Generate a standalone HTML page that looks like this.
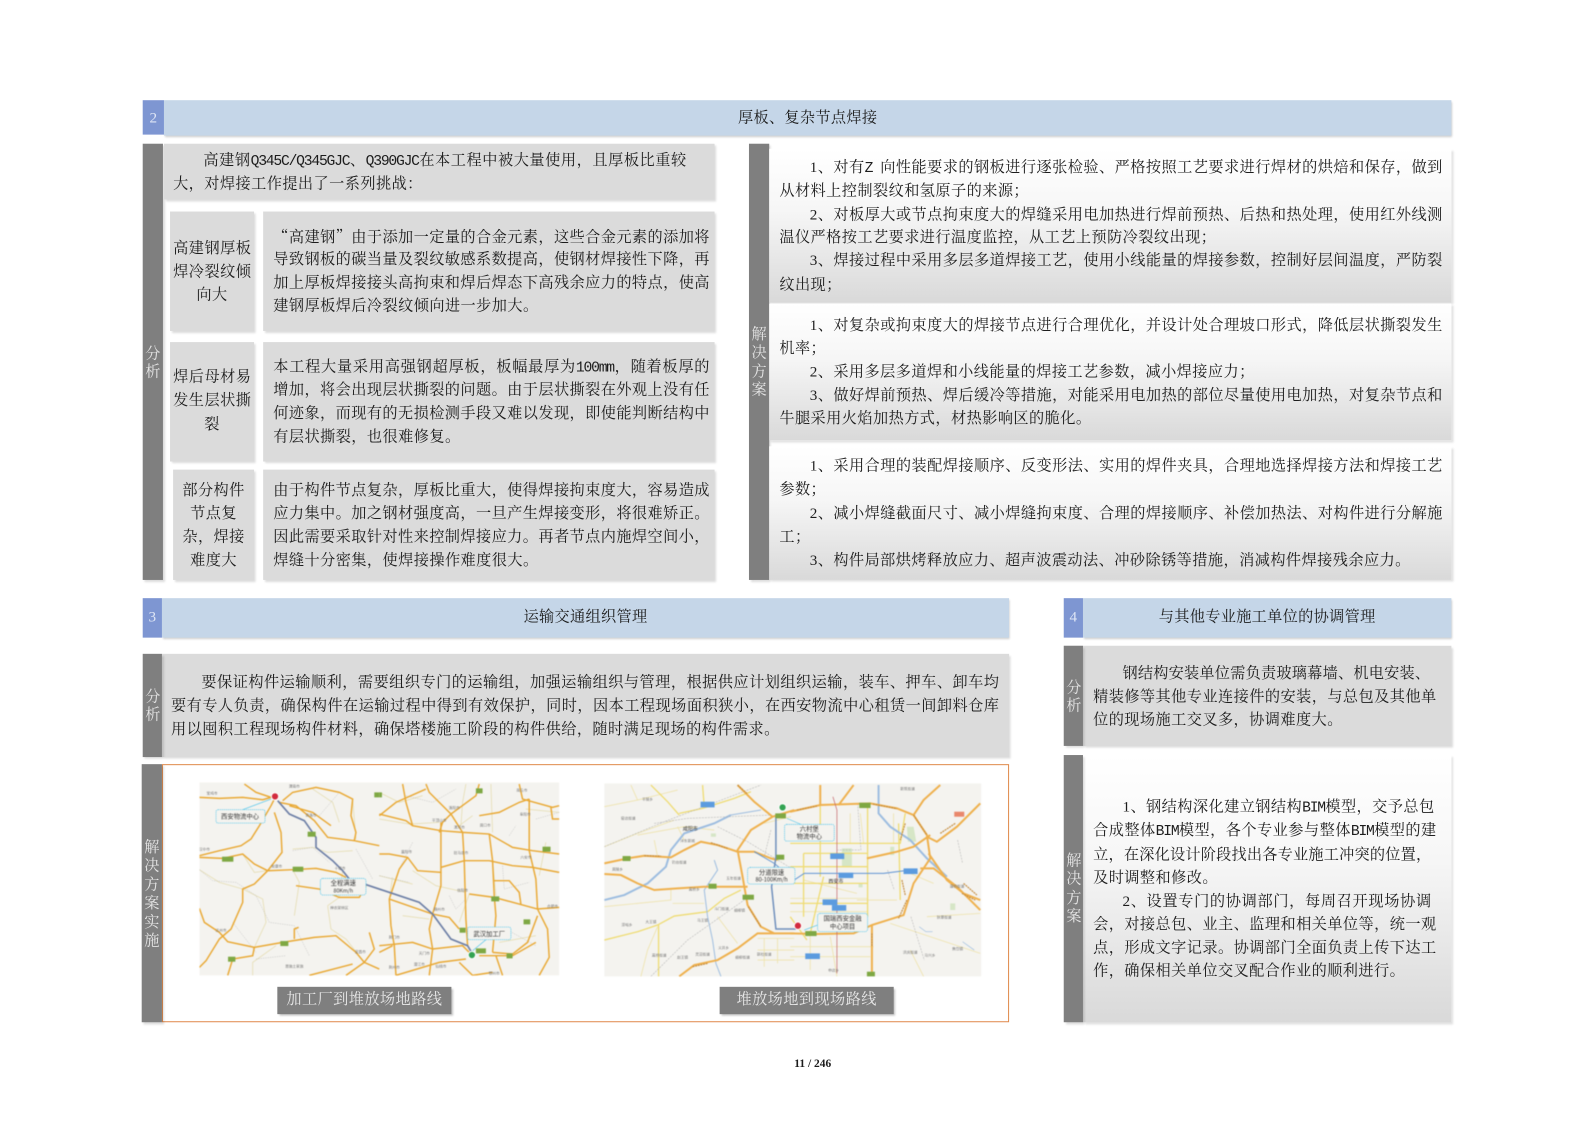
<!DOCTYPE html>
<html lang="zh"><head><meta charset="utf-8"><title>厚板、复杂节点焊接</title>
<style>
html,body{margin:0;padding:0;background:#fff}
body{width:1587px;height:1122px;overflow:hidden;position:relative}
#p{position:absolute;left:0;top:0;width:1568px;height:1108px;transform:scale(1.01212);transform-origin:0 0;font-family:"Liberation Serif","Noto Serif CJK SC",serif;font-size:15px;color:#1c1c1c}
#p div{position:absolute;box-sizing:border-box}
.b{background:#dbdbdb;box-shadow:2px 2px 2px rgba(0,0,0,.14)}
.g{background:linear-gradient(#fff 0%,#f6f6f6 40%,#d9d9d9 100%);box-shadow:2px 2px 2px rgba(0,0,0,.12)}
.h{background:#c5d6e8;box-shadow:1px 2px 2px rgba(0,0,0,.2);text-align:center;line-height:36px;letter-spacing:.3px}
.n{background:#7e96d2;color:#dfe6f5;text-align:center;line-height:36px}
.v{background:#7f7f7f;box-shadow:2px 2px 2px rgba(0,0,0,.14)}
.t{color:#e4e4e4;width:20px;text-align:center;line-height:18.5px;font-size:15px;margin-top:1.5px}
.l{white-space:nowrap;line-height:24px;height:24px;margin-top:1.2px;letter-spacing:.42px}
.j{text-align:justify;text-align-last:justify;white-space:normal;letter-spacing:0}
.c{text-align:center}
.m{font-family:"Liberation Mono",monospace;font-size:14.5px;letter-spacing:-1.2px}
.q{font-family:"Noto Serif CJK SC",serif}
.cap{background:#7f7f7f;color:#e6e6e6;text-align:center;line-height:27px;box-shadow:2px 2px 2px rgba(0,0,0,.25);letter-spacing:.4px}
svg{position:absolute;filter:blur(.45px)}
svg text{font-family:"Noto Sans CJK SC",sans-serif}
</style></head><body><div id="p">

<div class="h" style="left:162px;top:99px;width:1272px;height:35px">厚板、复杂节点焊接</div>
<div class="n" style="left:141px;top:99px;width:21px;height:34px">2</div>

<div class="v" style="left:141px;top:142px;width:20px;height:431px"></div>
<div class="t" style="left:141px;top:339px">分<br>析</div>

<div class="b" style="left:162px;top:142px;width:544px;height:55px"></div>
<div class="l j" style="left:201px;top:146px;width:477px">高建钢<span class="m">Q345C/Q345GJC</span>、<span class="m">Q390GJC</span>在本工程中被大量使用，且厚板比重较</div>
<div class="l" style="left:171px;top:169px">大，对焊接工作提出了一系列挑战：</div>

<div class="b" style="left:168px;top:209px;width:83px;height:118px"></div>
<div class="b" style="left:260px;top:209px;width:446px;height:118px"></div>
<div class="l j" style="left:171px;top:233px;width:77px">高建钢厚板</div>
<div class="l j" style="left:171px;top:256px;width:77px">焊冷裂纹倾</div>
<div class="l c" style="left:168px;top:279px;width:83px">向大</div>
<div class="l j" style="left:270px;top:221px;width:431px"><span class="q">“</span>高建钢<span class="q">”</span>由于添加一定量的合金元素，这些合金元素的添加将</div>
<div class="l j" style="left:270px;top:244px;width:431px">导致钢板的碳当量及裂纹敏感系数提高，使钢材焊接性下降，再</div>
<div class="l j" style="left:270px;top:267px;width:431px">加上厚板焊接接头高拘束和焊后焊态下高残余应力的特点，使高</div>
<div class="l" style="left:270px;top:290px">建钢厚板焊后冷裂纹倾向进一步加大。</div>

<div class="b" style="left:168px;top:338px;width:83px;height:118px"></div>
<div class="b" style="left:260px;top:338px;width:446px;height:118px"></div>
<div class="l j" style="left:171px;top:360px;width:77px">焊后母材易</div>
<div class="l j" style="left:171px;top:383px;width:77px">发生层状撕</div>
<div class="l c" style="left:168px;top:407px;width:83px">裂</div>
<div class="l j" style="left:270px;top:350px;width:431px">本工程大量采用高强钢超厚板，板幅最厚为<span class="m">100mm</span>，随着板厚的</div>
<div class="l j" style="left:270px;top:373px;width:431px">增加，将会出现层状撕裂的问题。由于层状撕裂在外观上没有任</div>
<div class="l j" style="left:270px;top:396px;width:431px">何迹象，而现有的无损检测手段又难以发现，即使能判断结构中</div>
<div class="l" style="left:270px;top:419px">有层状撕裂，也很难修复。</div>

<div class="b" style="left:171px;top:464px;width:80px;height:109px"></div>
<div class="b" style="left:260px;top:464px;width:446px;height:109px"></div>
<div class="l c" style="left:171px;top:472px;width:80px">部分构件</div>
<div class="l c" style="left:171px;top:495px;width:80px">节点复</div>
<div class="l c" style="left:171px;top:518px;width:80px">杂，焊接</div>
<div class="l c" style="left:171px;top:541px;width:80px">难度大</div>
<div class="l j" style="left:270px;top:472px;width:431px">由于构件节点复杂，厚板比重大，使得焊接拘束度大，容易造成</div>
<div class="l j" style="left:270px;top:495px;width:431px">应力集中。加之钢材强度高，一旦产生焊接变形，将很难矫正。</div>
<div class="l j" style="left:270px;top:518px;width:431px">因此需要采取针对性来控制焊接应力。再者节点内施焊空间小，</div>
<div class="l" style="left:270px;top:541px">焊缝十分密集，使焊接操作难度很大。</div>

<div class="v" style="left:740px;top:142px;width:20px;height:431px"></div>
<div class="t" style="left:740px;top:320px">解<br>决<br>方<br>案</div>

<div class="g" style="left:760px;top:147px;width:674px;height:152px"></div>
<div class="l j" style="left:800px;top:153px;width:625px">1、对有<span class="m">Z </span>向性能要求的钢板进行逐张检验、严格按照工艺要求进行焊材的烘焙和保存，做到</div>
<div class="l" style="left:770px;top:176px">从材料上控制裂纹和氢原子的来源；</div>
<div class="l j" style="left:800px;top:200px;width:625px">2、对板厚大或节点拘束度大的焊缝采用电加热进行焊前预热、后热和热处理，使用红外线测</div>
<div class="l" style="left:770px;top:222px">温仪严格按工艺要求进行温度监控，从工艺上预防冷裂纹出现；</div>
<div class="l j" style="left:800px;top:245px;width:625px">3、焊接过程中采用多层多道焊接工艺，使用小线能量的焊接参数，控制好层间温度，严防裂</div>
<div class="l" style="left:770px;top:269px">纹出现；</div>

<div class="g" style="left:760px;top:300px;width:674px;height:135px"></div>
<div class="l j" style="left:800px;top:309px;width:625px">1、对复杂或拘束度大的焊接节点进行合理优化，并设计处合理坡口形式，降低层状撕裂发生</div>
<div class="l" style="left:770px;top:332px">机率；</div>
<div class="l" style="left:800px;top:355px">2、采用多层多道焊和小线能量的焊接工艺参数，减小焊接应力；</div>
<div class="l j" style="left:800px;top:378px;width:625px">3、做好焊前预热、焊后缓冷等措施，对能采用电加热的部位尽量使用电加热，对复杂节点和</div>
<div class="l" style="left:770px;top:401px">牛腿采用火焰加热方式，材热影响区的脆化。</div>

<div class="g" style="left:760px;top:441px;width:674px;height:132px"></div>
<div class="l j" style="left:800px;top:448px;width:625px">1、采用合理的装配焊接顺序、反变形法、实用的焊件夹具，合理地选择焊接方法和焊接工艺</div>
<div class="l" style="left:770px;top:471px">参数；</div>
<div class="l j" style="left:800px;top:495px;width:625px">2、减小焊缝截面尺寸、减小焊缝拘束度、合理的焊接顺序、补偿加热法、对构件进行分解施</div>
<div class="l" style="left:770px;top:518px">工；</div>
<div class="l" style="left:800px;top:541px">3、构件局部烘烤释放应力、超声波震动法、冲砂除锈等措施，消减构件焊接残余应力。</div>

<div class="h" style="left:160px;top:591px;width:837px;height:39px;line-height:39px">运输交通组织管理</div>
<div class="n" style="left:141px;top:591px;width:19px;height:39px;line-height:39px">3</div>

<div class="h" style="left:1070px;top:591px;width:364px;height:39px;line-height:39px">与其他专业施工单位的协调管理</div>
<div class="n" style="left:1051px;top:591px;width:19px;height:39px;line-height:39px">4</div>

<div class="b" style="left:160px;top:646px;width:837px;height:102px"></div>
<div class="v" style="left:141px;top:646px;width:19px;height:102px"></div>
<div class="t" style="left:141px;top:678px">分<br>析</div>
<div class="l j" style="left:199px;top:662px;width:788px">要保证构件运输顺利，需要组织专门的运输组，加强运输组织与管理，根据供应计划组织运输，装车、押车、卸车均</div>
<div class="l j" style="left:169px;top:685px;width:818px">要有专人负责，确保构件在运输过程中得到有效保护，同时，因本工程现场面积狭小，在西安物流中心租赁一间卸料仓库</div>
<div class="l" style="left:169px;top:708px">用以囤积工程现场构件材料，确保塔楼施工阶段的构件供给，随时满足现场的构件需求。</div>

<div style="left:160px;top:755px;width:837px;height:255px;border:1.3px solid #e08a4c;background:#fff"></div>
<div class="v" style="left:140px;top:755px;width:20px;height:255px"></div>
<div class="t" style="left:140px;top:827px">解<br>决<br>方<br>案<br>实<br>施</div>

<svg style="left:197px;top:773px" width="355.5" height="190.7" viewBox="0 0 1080 579" preserveAspectRatio="none">
<rect width="1080" height="579" fill="#f4f3ef"/>
<g fill="none" stroke="#e6deb4" stroke-width="2.5">
<path d="M130 215L165 270L205 265M130 320L190 350L200 420L165 495M0 262L60 300L130 320M280 262L300 300L285 400M385 370L395 440L440 470L495 540M280 200L340 195L385 210L460 205M430 265L420 345L385 370M460 50L470 170M340 20L400 60L420 120M230 490L160 540L160 579"/>
<g transform="translate(540 0)"><path d="M0 30L60 60L130 40M0 110L90 125L180 120M40 285L30 350M100 265L170 310L260 330M245 130L250 60L260 5M335 5L340 150M340 235L350 340M270 335L240 420M440 80L540 90M500 180L480 280M0 280L100 305M70 400L150 410M280 100L240 130M360 480L470 460"/></g>
</g>
<g fill="none" stroke="#b5b5b5" stroke-width="1.3" stroke-dasharray="4 3">
<path d="M0 262L40 295L110 300L170 340L210 420L285 430L330 520M280 205L340 195L390 240M360 100L420 30M100 420L170 510M470 200L520 290M170 530L260 520"/>
<g transform="translate(540 0)"><path d="M80 40L160 60L230 20M210 340L230 380L260 350M370 250L375 320L450 300M390 160L410 130M380 440L470 490M0 280L90 300M100 180L60 260M470 110L540 90"/></g>
</g>
<g fill="none" stroke="#e9a935" stroke-width="4.4">
<path d="M0 45L60 48L130 45L190 52L215 45M135 5L170 30L215 45M0 220L60 205L125 190L155 170L180 130L215 70L225 50"/>
<path d="M0 225L70 228L130 215L165 245L205 265L280 262L350 258L410 270L440 285M225 90L245 150L248 210L205 265L165 305L130 320L130 360L95 440L60 470L20 535L0 555"/>
<path d="M240 60L290 70L345 115L385 165L465 175L540 190M250 55L280 30L350 15L420 30L460 50L455 100L470 150L465 175M270 70L340 90L395 130"/>
<path d="M290 310L360 320L420 345L480 345L500 310M0 378L15 420L60 450L85 478L165 495L250 480L345 465L410 460L470 510L495 540"/>
<path d="M285 470L285 440L298 435M165 495L160 520L100 530L85 579M510 450L525 500L495 540L540 560M495 540L440 579M330 579L460 545"/>
<g transform="translate(540 0)">
<path d="M0 215L30 215L85 225L115 265L185 270L185 120M0 95L80 115L100 130L185 145L250 150L330 155L400 195L460 205L540 215M70 5L80 60L100 130M140 5L150 30L215 95L190 120L180 150M215 95L290 40L300 5"/>
<path d="M215 95L250 150L255 235L260 410L265 490M85 225L60 260L30 350L35 430L45 490L50 579M185 270L185 310L160 395L150 440L160 500L150 579M255 235L330 235L400 250L460 255L540 270M185 255L255 235"/>
<path d="M330 155L340 235L345 340L350 400L340 510M270 335L345 345L420 365L475 380L540 375M345 295L390 295L420 330L425 365M475 380L505 440L510 525L480 579M450 50L450 205L470 290L475 380"/>
<path d="M420 5L430 50L520 75L540 70M300 100L360 90L420 60L450 50M0 100L50 60L140 20M515 75L520 110L540 110M0 490L100 480L160 500L250 490L270 510M30 350L160 395L210 405L240 440"/>
<path d="M340 510L400 515L445 480L475 400M300 520L400 520L470 480M350 520L370 579M260 530L180 540L50 579M240 540L280 579L340 570M0 510L40 490"/>
</g></g>
<path d="M235 55L270 95L315 115L350 165L350 195L400 235L430 265L450 290L540 320L600 340L660 360L700 395L755 470L805 490L820 515" fill="none" stroke="#6d7fa6" stroke-width="5"/>
<g fill="#7ea843"><rect x="325" y="148" width="24" height="15"/><rect x="68" y="223" width="34" height="15"/><rect x="280" y="253" width="32" height="15"/><rect x="243" y="476" width="24" height="15"/><rect x="86" y="523" width="22" height="15"/><rect x="525" y="30" width="15" height="15"/><rect x="540" y="30" width="8" height="15"/><rect x="830" y="18" width="20" height="15"/><rect x="1030" y="193" width="24" height="15"/><rect x="876" y="342" width="24" height="15"/><rect x="973" y="411" width="20" height="15"/><rect x="781" y="436" width="18" height="15"/><rect x="922" y="513" width="18" height="15"/><rect x="830" y="498" width="30" height="15"/></g>
<g fill="#f4f3ef" stroke="#4cc4ec" stroke-width="2" stroke-dasharray="4 2">
<rect x="50" y="82" width="147" height="40" rx="6"/><rect x="363" y="288" width="137" height="50" rx="8"/><rect x="805" y="434" width="130" height="38" rx="6"/>
</g>
<path d="M130 82L215 50M820 505L860 472" stroke="#4cc4ec" stroke-width="2" fill="none"/>
<circle cx="227" cy="42" r="11" fill="#d22b3e" stroke="#fff" stroke-width="3"/>
<circle cx="818" cy="518" r="11" fill="#33a352" stroke="#fff" stroke-width="3"/>
<g fill="#333" font-size="19" text-anchor="middle">
<text x="122" y="108">西安物流中心</text><text x="432" y="308">全程满速</text><text x="432" y="331" font-size="16">80Km/h</text><text x="870" y="461">武汉加工厂</text>
</g>
<g fill="#777" font-size="11" text-anchor="middle">
<text x="38" y="36">宝鸡市</text><text x="285" y="16">渭南市</text><text x="335" y="102">商洛市</text><text x="15" y="205">汉中市</text><text x="232" y="255">安康市</text><text x="422" y="262">十堰市</text><text x="420" y="380">神农架林区</text><text x="65" y="448">达州市</text><text x="285" y="556">恩施土家族</text><text x="483" y="512">宜昌市</text><text x="765" y="80">洛阳市</text><text x="720" y="118">平顶山市</text><text x="780" y="138">漯河市</text><text x="858" y="132">周口市</text><text x="968" y="28">商丘市</text><text x="978" y="100">阜阳市</text><text x="785" y="215">驻马店市</text><text x="622" y="212">襄阳市</text><text x="980" y="228">六安市</text><text x="790" y="328">信阳市</text><text x="720" y="385">随州市</text><text x="1060" y="375">合肥市</text><text x="585" y="468">荆门市</text><text x="675" y="516">天门市</text><text x="585" y="558">荆州市</text><text x="660" y="550">潜江市</text><text x="725" y="556">仙桃市</text><text x="885" y="576">鄂州市</text></g>
</svg>

<svg style="left:597px;top:774px" width="372.5" height="190.7" viewBox="0 0 1131 579" preserveAspectRatio="none">
<rect width="1131" height="579" fill="#f4f3ef"/>
<g fill="#d6e6c6"><path d="M713 195h30v55h-30zM858 190h12v25h-12zM908 130l20 0 8 45-25 0zM1038 360h15v20h-15zM763 300h12v12h-12zM320 150h15v10h-15z"/></g>
<g fill="none" stroke="#eee3ad" stroke-width="2.5">
<path d="M0 70L100 50L180 30L220 20M0 190L100 150L210 110M100 155L240 130L330 140M150 170L160 220M0 370L200 350L200 320M205 360L300 360M340 400L400 480M80 5L100 50M220 130L240 170M110 579L130 500L160 430M460 465H570M460 500H570M460 530H570M480 465V550M520 465V540M480 120L560 100"/>
<g transform="translate(558 0)"><path d="M0 490H250M0 520H240M60 450V560M120 460L140 579M0 345H230M0 385H230M40 290L200 330M200 350H320M360 270L430 300M410 400L570 390M300 420L570 510M310 90V180M210 90L220 180M360 500L400 579M180 90L180 180"/></g>
</g>
<g fill="none" stroke="#efdc74" stroke-width="4">
<path d="M140 5L190 55L225 95M295 5L300 70M225 90L295 75L390 45L440 25M0 470L100 445L160 425L210 398L310 385L360 345L410 320M163 425V579"/>
<g transform="translate(558 0)"><path d="M90 65V280M40 210V400M232 60V400M325 120L330 350M345 90L330 180H0M40 210H230M0 250H230M0 300H230M0 360L230 360M100 280L60 450M0 400L50 470M230 225L320 205"/></g>
</g>
<g fill="none" stroke="#9dbde0">
<path d="M380 95L330 120L240 150L200 200L185 250L130 300L60 335L0 350" stroke-width="6"/>
<path d="M330 230L340 260L300 320L310 400L325 470L335 540L350 579" stroke-width="3"/>
<path d="M470 80L380 95" stroke-width="3"/>
<path d="M823 5L823 90L858 130L918 170L968 225L1028 280" stroke-width="6"/>
<path d="M945 430L965 445L985 445M1075 475L1110 500" stroke-width="2"/>
</g>
<g fill="none" stroke="#adadad" stroke-width="1.5" stroke-dasharray="6 3">
<path d="M0 190L180 115L470 5M150 120L250 105L500 95M340 130L430 175L570 260M140 579L250 470L420 350M760 60L770 200L700 200M850 260L870 320M920 400L960 530M1060 170L1075 240M500 140L480 220"/>
</g>
<g fill="none" stroke="#efb14e" stroke-width="6">
<path d="M400 5L450 55L505 100L440 140L400 200L415 280L430 365L470 430L510 450H570"/>
<path d="M0 240L70 225L120 217L200 222L240 200L290 175L340 185L400 205L450 205L500 225L520 230"/>
<path d="M0 272L50 275L100 300L150 320L220 315L300 310L430 310"/>
<path d="M225 579L270 545L340 530L400 495L460 450L510 450M505 100L570 80"/>
<g transform="translate(558 0)">
<path d="M0 85L90 65L240 60L320 75L370 95L410 155L420 225L370 300L340 395L245 425L190 450L80 452L0 450"/>
<path d="M410 160L440 175L500 130L570 60M415 210L470 290L520 330L570 350M390 255L430 255L500 310L570 380M245 425V570M90 5V65M190 5L145 65M230 225L320 205L370 190L420 155M370 95L400 50L450 5"/>
</g></g>
<g fill="none" stroke="#c58c3e" stroke-width="3.5" stroke-dasharray="6 2">
<path d="M400 5L428 30M120 217L170 218M320 178L370 195M432 370L470 430M265 550L310 540"/>
<g transform="translate(558 0)"><path d="M20 80L80 68M248 62L320 76M370 95L410 155M345 120L330 170M335 290L345 335M350 350L325 405M245 450V490M450 150L495 120M515 330L555 350M520 300L560 335"/></g>
</g>
<path d="M686 40L698 80L698 570" stroke="#c66a6f" stroke-width="2.2" fill="none"/>
<path d="M450 205L510 240L570 290L600 270H838L933 258" fill="none" stroke="#5f93d2" stroke-width="2.8"/>
<path d="M515 100L515 220L502 310L515 437H575" fill="none" stroke="#6f8fbc" stroke-width="4.5"/>
<g fill="#5b9bdf"><rect x="289" y="55" width="42" height="17"/><rect x="678" y="210" width="42" height="17"/><rect x="703" y="268" width="44" height="16"/><rect x="655" y="348" width="44" height="17"/><rect x="683" y="365" width="43" height="17"/><rect x="898" y="255" width="42" height="17"/><rect x="603" y="510" width="44" height="17"/></g>
<rect x="1050" y="85" width="30" height="15" fill="#e9876b"/>
<g fill="#7ea843"><rect x="765" y="58" width="34" height="16"/><rect x="513" y="90" width="32" height="15"/><rect x="516" y="214" width="24" height="15"/><rect x="55" y="218" width="24" height="15"/><rect x="313" y="301" width="24" height="15"/><rect x="415" y="334" width="34" height="15"/><rect x="603" y="443" width="34" height="15"/><rect x="788" y="565" width="24" height="14"/></g>
<g fill="#f4f3ef" stroke="#4cc4ec" stroke-width="2" stroke-dasharray="4 2">
<rect x="541" y="123" width="149" height="50" rx="6"/><rect x="430" y="252" width="142" height="50" rx="8"/><rect x="640" y="390" width="150" height="55" rx="8"/>
</g>
<path d="M548 105L590 123M600 440L640 425" stroke="#4cc4ec" stroke-width="2" fill="none"/>
<circle cx="535" cy="72" r="11" fill="#33a352" stroke="#fff" stroke-width="3"/>
<circle cx="581" cy="427" r="11" fill="#d22b3e" stroke="#fff" stroke-width="3"/>
<g fill="#333" font-size="19" text-anchor="middle">
<text x="615" y="143">六村堡</text><text x="615" y="166">物流中心</text><text x="502" y="273">分道限速</text><text x="502" y="295" font-size="17">80-100Km/h</text><text x="715" y="412">国瑞西安金融</text><text x="715" y="435">中心项目</text><text x="258" y="142" font-size="15">咸阳市</text><text x="695" y="299" font-size="15">西安市</text>
</g>
<g fill="#777" font-size="11" text-anchor="middle">
<text x="130" y="52">平陵乡</text><text x="72" y="108">窑店街道</text><text x="225" y="240">钓台街道</text><text x="250" y="176">沣东新城</text><text x="40" y="262">周陵乡</text><text x="68" y="428">涝峪乡</text><text x="140" y="419">大王镇</text><text x="165" y="520">高桥街道</text><text x="235" y="525">赵王镇</text><text x="295" y="516">灵沼街道</text><text x="358" y="497">义井乡</text><text x="415" y="526">细柳街道</text><text x="480" y="516">郭杜街道</text><text x="688" y="565">申店乡</text><text x="910" y="20">新筑街道</text><text x="1058" y="312">灞桥街道</text><text x="1020" y="406">狄寨街道</text><text x="1060" y="500">焦岱镇</text><text x="918" y="510">洪庆街道</text><text x="388" y="288">五年街道</text><text x="270" y="322">高桥乡</text><text x="352" y="380">斗门街道</text><text x="406" y="384">细柳镇</text><text x="295" y="414">马王镇</text><text x="977" y="520">马兴乡</text></g>
</svg>

<div class="cap" style="left:274px;top:975px;width:172px;height:27px">加工厂到堆放场地路线</div>
<div class="cap" style="left:711px;top:975px;width:172px;height:27px">堆放场地到现场路线</div>

<div class="b" style="left:1070px;top:638px;width:364px;height:99px"></div>
<div class="v" style="left:1051px;top:638px;width:19px;height:99px"></div>
<div class="t" style="left:1051px;top:669px">分<br>析</div>
<div class="l j" style="left:1109px;top:653px;width:304px">钢结构安装单位需负责玻璃幕墙、机电安装、</div>
<div class="l j" style="left:1080px;top:676px;width:339px">精装修等其他专业连接件的安装，与总包及其他单</div>
<div class="l" style="left:1080px;top:699px">位的现场施工交叉多，协调难度大。</div>

<div class="g" style="left:1070px;top:746px;width:364px;height:264px"></div>
<div class="v" style="left:1051px;top:746px;width:19px;height:264px"></div>
<div class="t" style="left:1051px;top:840px">解<br>决<br>方<br>案</div>
<div class="l j" style="left:1109px;top:785px;width:308px">1、钢结构深化建立钢结构<span class="m">BIM</span>模型，交予总包</div>
<div class="l j" style="left:1080px;top:808px;width:339px">合成整体<span class="m">BIM</span>模型，各个专业参与整体<span class="m">BIM</span>模型的建</div>
<div class="l j" style="left:1080px;top:832px;width:334px">立，在深化设计阶段找出各专业施工冲突的位置，</div>
<div class="l" style="left:1080px;top:855px">及时调整和修改。</div>
<div class="l j" style="left:1109px;top:878px;width:305px">2、设置专门的协调部门，每周召开现场协调</div>
<div class="l j" style="left:1080px;top:901px;width:339px">会，对接总包、业主、监理和相关单位等，统一观</div>
<div class="l j" style="left:1080px;top:924px;width:339px">点，形成文字记录。协调部门全面负责上传下达工</div>
<div class="l" style="left:1080px;top:947px">作，确保相关单位交叉配合作业的顺利进行。</div>

<div class="l c" style="left:703px;top:1038px;width:200px;font-size:11.3px;font-weight:bold;letter-spacing:0">11 / 246</div>
</div></body></html>
